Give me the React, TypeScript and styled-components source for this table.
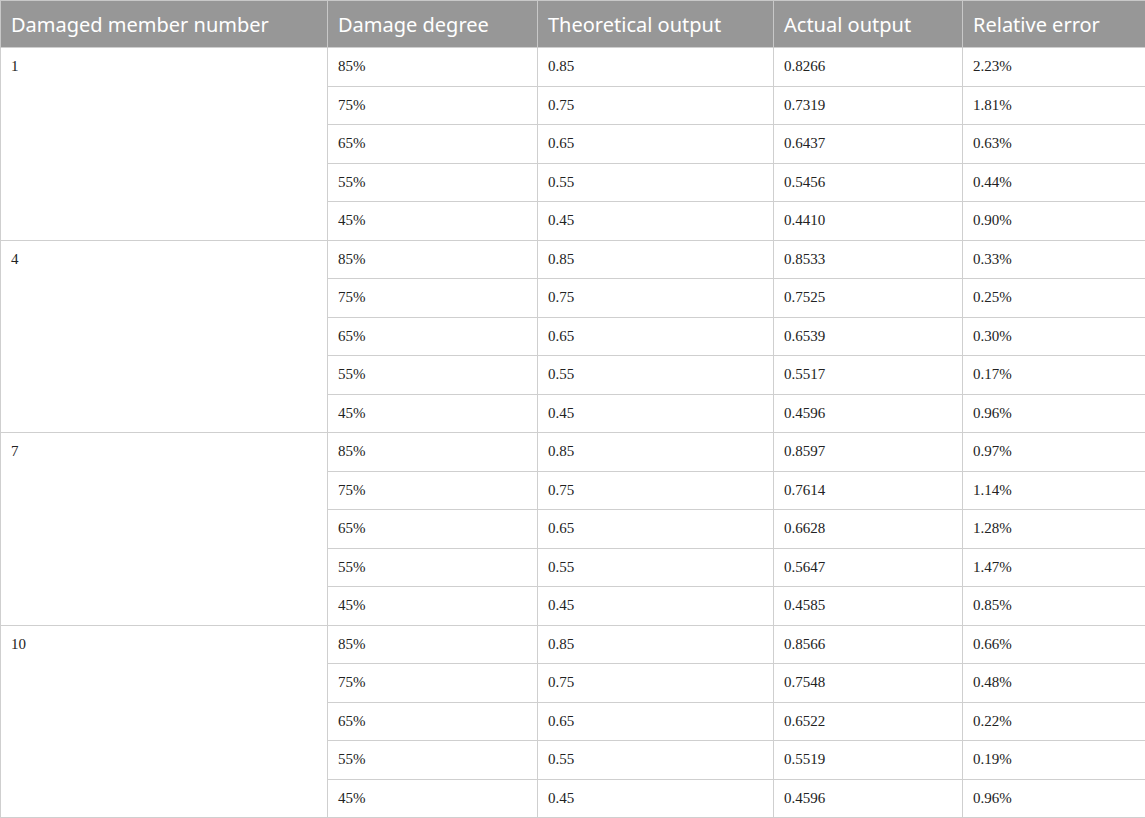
import React from "react";
import styled, { createGlobalStyle } from "styled-components";

const Global = createGlobalStyle`
  html, body { margin: 0; padding: 0; background: #ffffff; }
`;

const Table = styled.table`
  width: 1145px;
  border-collapse: collapse;
  table-layout: fixed;
`;

const HeadCell = styled.th<{ $w: number }>`
  width: ${(p) => p.$w}px;
  height: 47px;
  box-sizing: border-box;
  background: #979797;
  color: #ffffff;
  font-family: "Noto Sans", "Open Sans", sans-serif;
  font-weight: 400;
  font-size: 20px;
  text-align: left;
  padding: 0 10px;
  border: 1px solid #c8c8c8;
  border-bottom: none;
  vertical-align: middle;
`;

const Cell = styled.td<{ $top?: boolean }>`
  height: 38.5px;
  box-sizing: border-box;
  font-family: "Liberation Serif", "Times New Roman", serif;
  font-size: 15px;
  color: #222;
  padding: 0 10px;
  border: 1px solid #cfcfcf;
  vertical-align: ${(p) => (p.$top ? "top" : "middle")};
  line-height: 37px;
`;

const groups: { id: string; rows: [string, string, string, string][] }[] = [
  {
    id: "1",
    rows: [
      ["85%", "0.85", "0.8266", "2.23%"],
      ["75%", "0.75", "0.7319", "1.81%"],
      ["65%", "0.65", "0.6437", "0.63%"],
      ["55%", "0.55", "0.5456", "0.44%"],
      ["45%", "0.45", "0.4410", "0.90%"],
    ],
  },
  {
    id: "4",
    rows: [
      ["85%", "0.85", "0.8533", "0.33%"],
      ["75%", "0.75", "0.7525", "0.25%"],
      ["65%", "0.65", "0.6539", "0.30%"],
      ["55%", "0.55", "0.5517", "0.17%"],
      ["45%", "0.45", "0.4596", "0.96%"],
    ],
  },
  {
    id: "7",
    rows: [
      ["85%", "0.85", "0.8597", "0.97%"],
      ["75%", "0.75", "0.7614", "1.14%"],
      ["65%", "0.65", "0.6628", "1.28%"],
      ["55%", "0.55", "0.5647", "1.47%"],
      ["45%", "0.45", "0.4585", "0.85%"],
    ],
  },
  {
    id: "10",
    rows: [
      ["85%", "0.85", "0.8566", "0.66%"],
      ["75%", "0.75", "0.7548", "0.48%"],
      ["65%", "0.65", "0.6522", "0.22%"],
      ["55%", "0.55", "0.5519", "0.19%"],
      ["45%", "0.45", "0.4596", "0.96%"],
    ],
  },
];

const headers: [string, number][] = [
  ["Damaged member number", 327],
  ["Damage degree", 210],
  ["Theoretical output", 236],
  ["Actual output", 189],
  ["Relative error", 183],
];

export default function App() {
  return (
    <>
      <Global />
      <Table>
        <thead>
          <tr>
            {headers.map(([h, w]) => (
              <HeadCell key={h} $w={w}>
                {h}
              </HeadCell>
            ))}
          </tr>
        </thead>
        <tbody>
          {groups.map((g) =>
            g.rows.map((r, i) => (
              <tr key={g.id + "-" + i}>
                {i === 0 && (
                  <Cell rowSpan={5} $top>
                    {g.id}
                  </Cell>
                )}
                {r.map((c, j) => (
                  <Cell key={j}>{c}</Cell>
                ))}
              </tr>
            ))
          )}
        </tbody>
      </Table>
    </>
  );
}
